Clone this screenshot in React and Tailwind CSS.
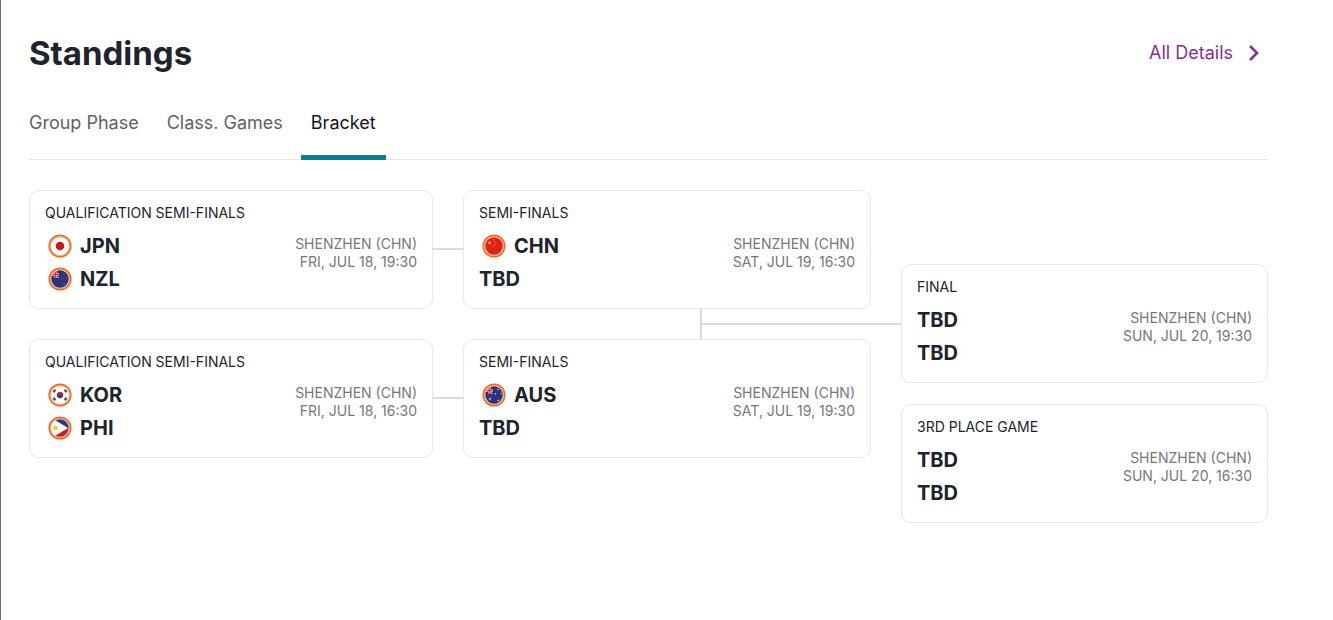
import React, { useState } from 'react';

const tabs = ['Group Phase', 'Class. Games', 'Bracket'];

function Star({ x, y, r, fill }) {
  const points = Array.from({ length: 10 }, (_, i) => {
    const d = i % 2 ? r * 0.4 : r;
    const a = (Math.PI / 5) * i - Math.PI / 2;
    return `${x + d * Math.cos(a)},${y + d * Math.sin(a)}`;
  }).join(' ');
  return <polygon points={points} fill={fill} />;
}

function UnionCanton() {
  return (
    <g>
      <path d="M0 0h11v11H0z" fill="#2b3478" />
      <path d="M2 4l9 7" stroke="#d9a9b8" strokeWidth="1" />
      <path d="M0 7.5h11M7.5 2v9" stroke="#f3e4e8" strokeWidth="2.4" />
      <path d="M0 7.5h11M7.5 2v9" stroke="#e0303c" strokeWidth="1.5" />
    </g>
  );
}

const flags = {
  JPN: (
    <g>
      <path d="M0 0h24v24H0z" fill="#fff" />
      <circle cx="12" cy="12" r="4.3" fill="#c8161d" />
    </g>
  ),
  NZL: (
    <g>
      <path d="M0 0h24v24H0z" fill="#2b3478" />
      <UnionCanton />
      <Star x={16} y={7.5} r={1.1} fill="#b2506f" />
      <Star x={18.5} y={11} r={1.1} fill="#b2506f" />
      <Star x={14} y={12} r={1.1} fill="#b2506f" />
      <Star x={16} y={17} r={1.3} fill="#b2506f" />
    </g>
  ),
  KOR: (
    <g>
      <path d="M0 0h24v24H0z" fill="#fff" />
      <g transform="rotate(25 12 12)">
        <path d="M8.8 12a3.2 3.2 0 0 1 6.4 0z" fill="#c8202f" />
        <path d="M8.8 12a3.2 3.2 0 0 0 6.4 0z" fill="#26408b" />
        <circle cx="10.4" cy="12" r="1.6" fill="#c8202f" />
        <circle cx="13.6" cy="12" r="1.6" fill="#26408b" />
      </g>
      <path d="M5.4 9.2l2-2.4M16.6 17.2l2-2.4M5.4 14.8l2 2.4M16.6 6.8l2 2.4" stroke="#4b5058" strokeWidth="2.2" />
    </g>
  ),
  PHI: (
    <g>
      <path d="M0 0h24v12H0z" fill="#233c92" />
      <path d="M0 12h24v12H0z" fill="#c9202c" />
      <path d="M2 1l18 11L2 23z" fill="#fff" />
      <Star x={7.5} y={12} r={3.4} fill="#f6cf3b" />
      <circle cx="7.5" cy="12" r="2.2" fill="#f6cf3b" />
    </g>
  ),
  CHN: (
    <g>
      <path d="M0 0h24v24H0z" fill="#de2016" />
      <Star x={7.6} y={8.8} r={2.2} fill="#f9c22e" />
      <Star x={11.3} y={5.8} r={0.9} fill="#f9a72e" />
      <Star x={13} y={7.7} r={0.9} fill="#f9a72e" />
      <Star x={13} y={10.3} r={0.9} fill="#f9a72e" />
      <Star x={11.3} y={12} r={0.9} fill="#f9a72e" />
    </g>
  ),
  AUS: (
    <g>
      <path d="M0 0h24v24H0z" fill="#2b3478" />
      <UnionCanton />
      <Star x={8} y={16} r={1.7} fill="#cfd2e6" />
      <Star x={16} y={6.5} r={1.2} fill="#cfd2e6" />
      <Star x={19} y={10.5} r={1.1} fill="#cfd2e6" />
      <Star x={13.5} y={11} r={1.2} fill="#cfd2e6" />
      <Star x={16} y={17.5} r={1.2} fill="#cfd2e6" />
    </g>
  ),
};

function Flag({ code }) {
  return (
    <svg viewBox="0 0 24 24" className="ml-[3px] mr-2 size-6 shrink-0" aria-hidden="true">
      <clipPath id={`flag-${code}`}>
        <circle cx="12" cy="12" r="9.4" />
      </clipPath>
      <g clipPath={`url(#flag-${code})`}>{flags[code]}</g>
      <circle cx="12" cy="12" r="9.4" fill="none" stroke="#e3cdc4" strokeWidth="1.4" />
      <circle cx="12" cy="12" r="10.7" fill="none" stroke="#fb6a1c" strokeWidth="1.7" />
    </svg>
  );
}

function GameCard({ title, teams, date, connected }) {
  return (
    <article className="relative rounded-[10px] border border-[#e8e8e8] bg-white px-[15px] py-[13px]">
      <h3 className="mb-[7px] text-sm leading-[18px] text-[#1d242d]">{title}</h3>
      <div className="flex items-start justify-between">
        <ul>
          {teams.map((team, i) => (
            <li key={i} className="flex h-[33px] items-center text-xl font-bold text-[#1d242d]">
              {flags[team] && <Flag code={team} />}
              {team}
            </li>
          ))}
        </ul>
        <p className="pt-[6px] text-right text-sm leading-[18px] text-[#75787b]">
          SHENZHEN (CHN)
          <br />
          {date}
        </p>
      </div>
      {connected && <span className="absolute top-[57px] left-full h-[2px] w-[31px] bg-[#dcdcdc]" />}
    </article>
  );
}

export default function App() {
  const [active, setActive] = useState('Bracket');

  return (
    <main className="min-h-screen border-l border-[#6b6b6b] bg-white pt-8 pr-16 pl-7 font-['Inter','Liberation_Sans',sans-serif]">
      <header className="flex items-center justify-between pr-2">
        <h2 className="text-[33px] leading-[42px] font-bold text-[#1d242d]">Standings</h2>
        <a href="#details" className="flex items-center gap-3 text-lg text-[#8b2f8f]">
          All Details
          <svg viewBox="0 0 16 18" className="h-[18px] w-4" fill="none" stroke="currentColor" strokeWidth="2.6">
            <path d="M5 2l7 7-7 7" />
          </svg>
        </a>
      </header>

      <nav className="mt-7 border-b border-[#e6e6e6]">
        <div role="tablist" className="-mb-px -ml-[10px] flex gap-2">
          {tabs.map((tab) => (
            <button
              key={tab}
              type="button"
              role="tab"
              aria-selected={tab === active}
              onClick={() => setActive(tab)}
              className={`border-b-5 px-[10px] pt-[7px] pb-[18px] text-lg ${
                tab === active ? 'border-[#00829b] text-[#14141e]' : 'border-transparent text-[#5f6266]'
              }`}
            >
              {tab}
            </button>
          ))}
        </div>
      </nav>

      <section className="mt-[30px] grid grid-cols-[404fr_408fr_367fr] gap-x-[30px] pr-px">
        <div className="flex flex-col gap-[30px]">
          <GameCard title="QUALIFICATION SEMI-FINALS" teams={['JPN', 'NZL']} date="FRI, JUL 18, 19:30" connected />
          <GameCard title="QUALIFICATION SEMI-FINALS" teams={['KOR', 'PHI']} date="FRI, JUL 18, 16:30" connected />
        </div>

        <div>
          <GameCard title="SEMI-FINALS" teams={['CHN', 'TBD']} date="SAT, JUL 19, 16:30" />
          {/* Link from both semi-finals to the final */}
          <div className="-mr-[30px] ml-[58%] flex h-[30px] items-center border-l-2 border-[#dcdcdc]">
            <span className="h-[2px] flex-1 bg-[#dcdcdc]" />
          </div>
          <GameCard title="SEMI-FINALS" teams={['AUS', 'TBD']} date="SAT, JUL 19, 19:30" />
        </div>

        <div className="flex flex-col gap-[21px] pt-[74px]">
          <GameCard title="FINAL" teams={['TBD', 'TBD']} date="SUN, JUL 20, 19:30" />
          <GameCard title="3RD PLACE GAME" teams={['TBD', 'TBD']} date="SUN, JUL 20, 16:30" />
        </div>
      </section>
    </main>
  );
}
